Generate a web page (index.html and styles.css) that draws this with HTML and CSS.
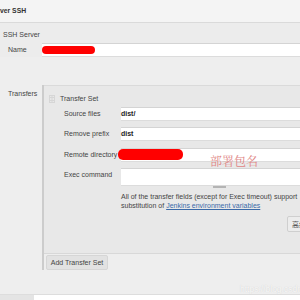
FILE: index.html
```html
<!DOCTYPE html>
<html>

<head>
    <title>Publish over SSH</title>
    <link rel="stylesheet" href="styles.css">
</head>

<body>
    <div class="header">ver SSH</div>

    <div class="server">
        <div class="server-title">SSH Server</div>
        <div class="row">
            <div class="label">Name</div>
            <div class="input"><span class="redact redact-name"></span></div>
        </div>
    </div>

    <div class="row transfers-row">
        <div class="label transfers-label">Transfers</div>
        <div class="transfer-box">
            <div class="transfer-inner">
                <div class="set-title">
                    <svg class="grip" width="6" height="8" viewBox="0 0 6 8">
                        <rect x="0.5" y="0.5" width="5" height="7" fill="none" stroke="#d6d6d6" />
                        <path d="M0 2.5H6M0 5.5H6M3 0V8" stroke="#d6d6d6" />
                    </svg>
                    Transfer Set
                </div>
                <div class="field">
                    <div class="flabel">Source files</div>
                    <div class="input">dist/</div>
                </div>
                <div class="field">
                    <div class="flabel">Remove prefix</div>
                    <div class="input">dist</div>
                </div>
                <div class="field field-remote">
                    <div class="flabel">Remote directory</div>
                    <div class="input"><span class="redact redact-remote"></span></div>
                </div>
                <div class="field">
                    <div class="flabel">Exec command</div>
                    <div class="area-wrap">
                        <div class="input textarea"></div>
                        <div class="resize"></div>
                    </div>
                </div>
                <div class="help">
                    All of the transfer fields (except for Exec timeout) support
                    substitution of <a href="#">Jenkins environment variables</a>
                </div>
                <div class="adv-row">
                    <button class="adv">高级...</button>
                </div>
            </div>
            <button class="add-btn">Add Transfer Set</button>
        </div>
    </div>

    <div class="footer"><div class="tab"></div></div>

    <span class="note">部署包名</span>
    <span class="watermark">https://blog.csdn</span>
</body>

</html>
```

FILE: styles.css
```css
html {
    overflow: hidden;
}

body {
    margin: 0;
    padding: 0;
    width: 320px;
    font-family: "Liberation Sans", Arial, sans-serif;
    font-size: 7px;
    color: #333;
    background-color: #eeeeee;
}

.header {
    height: 22px;
    line-height: 21px;
    background-color: #f4f4f4;
    border-bottom: 1px solid #dadada;
    font-weight: bold;
    font-size: 6.8px;
    color: #333;
}

.server {
    background-color: #ececec;
}

.server-title {
    padding: 7px 3px 4px;
    line-height: 9px;
    color: #444;
}

.row {
    display: flex;
}

.label {
    flex-shrink: 0;
    width: 34px;
    padding-left: 8px;
    line-height: 14px;
    color: #444;
}

.input {
    flex: 1;
    min-width: 0;
    box-sizing: border-box;
    height: 14px;
    padding-left: 3px;
    line-height: 12px;
    background-color: #fff;
    border-top: 1px solid #d4d4d4;
    border-bottom: 1px solid #dcdcdc;
    color: #222;
    font-weight: bold;
}

.row .input {
    padding-left: 0;
}

.redact {
    display: block;
    background-color: #ff0000;
}

.redact-name {
    width: 53px;
    height: 8px;
    margin-top: 2px;
    border-radius: 4px;
}

.redact-remote {
    width: 65px;
    height: 11px;
    margin-left: -3px;
    border-radius: 5px;
}

.transfers-row {
    margin-top: 28px;
}

.transfers-label {
    padding-top: 4px;
    line-height: 9px;
}

.transfer-box {
    flex: 1;
    min-width: 0;
    border-left: 2px solid #cccccc;
}

.transfer-inner {
    background-color: #e8e8e8;
    border-top: 1px solid #dadada;
    border-bottom: 1px solid #d8d8d8;
    padding-bottom: 21px;
}

.set-title {
    display: flex;
    align-items: center;
    padding: 8px 0 0 5px;
    line-height: 9px;
    color: #444;
}

.grip {
    margin-right: 5px;
}

.field {
    display: flex;
    margin-top: 4px;
}

.field + .field {
    margin-top: 6px;
}

.field + .field-remote {
    margin-top: 7px;
}

.flabel {
    flex-shrink: 0;
    width: 57px;
    padding-left: 20px;
    line-height: 14px;
    color: #444;
}

.area-wrap {
    flex: 1;
    min-width: 0;
    display: flex;
    flex-direction: column;
}

.textarea {
    flex: none;
    height: 18px;
}

.resize {
    width: 13px;
    height: 2px;
    margin-left: 92px;
    background-color: #b4b4b4;
}

.help {
    width: 180px;
    margin: 4px 0 0 77px;
    line-height: 9px;
    color: #444;
}

.help a {
    color: #3b6aa8;
}

.adv-row {
    margin: 6px 0 0 243px;
}

.adv {
    height: 16px;
    width: 40px;
    padding: 0 0 0 4px;
    text-align: left;
    font-family: "Noto Sans CJK SC", sans-serif;
    font-size: 7px;
    color: #555;
    background-color: #ececec;
    border: 1px solid #cfcfcf;
    border-radius: 2px;
}

.add-btn {
    display: block;
    width: 62px;
    height: 15px;
    margin: 1px 0 0 2px;
    padding: 0;
    font-family: "Liberation Sans", Arial, sans-serif;
    font-size: 7px;
    color: #444;
    background-color: #e2e2e2;
    border: 1px solid #d6d6d6;
    border-radius: 2px;
}

.footer {
    margin-top: 24px;
    height: 5px;
    background-color: #fff;
    border-top: 1px solid #dddddd;
}

.tab {
    width: 34px;
    height: 5px;
    background-color: #e4e4e4;
}

.note {
    position: absolute;
    left: 210px;
    top: 153px;
    font-family: "Noto Serif CJK SC", "Noto Sans CJK SC", serif;
    font-size: 12px;
    line-height: 16px;
    color: #e08585;
}

.watermark {
    position: absolute;
    left: 240px;
    top: 284px;
    font-size: 8.5px;
    line-height: 10px;
    color: #f8f8f8;
    text-shadow: 0 0 1px #c8c8c8;
}
```
